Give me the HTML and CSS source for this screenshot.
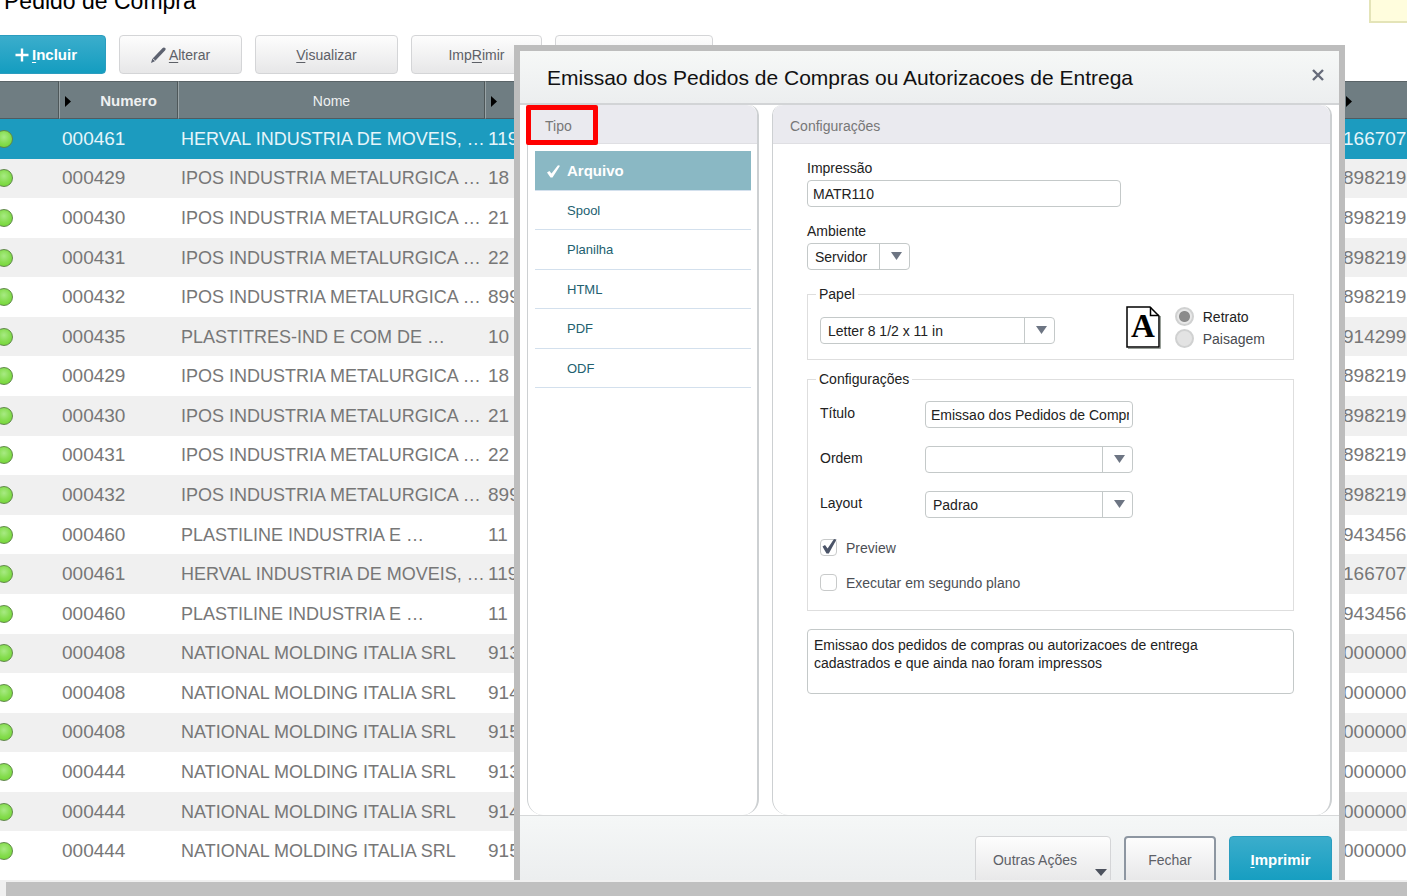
FILE: index.html
```html
<!DOCTYPE html>
<html lang="pt-BR">
<head>
<meta charset="utf-8">
<title>Pedido de Compra</title>
<link rel="stylesheet" href="styles.css">
</head>
<body>
<main class="page">
  <header class="page-head">
    <h1 class="page-title">Pedido de Compra</h1>
    <div class="note"></div>
  </header>
  <div class="toolbar">
    <button class="btn btn-primary w-add" type="button"><svg class="icon" width="14" height="14" viewBox="0 0 14 14"><path d="M7 0.5v13M0.5 7h13" stroke="#fff" stroke-width="2.4" fill="none"/></svg><span><u>I</u>ncluir</span></button>
    <button class="btn w-edit" type="button"><svg class="icon" width="15" height="16" viewBox="0 0 15 16"><path d="M0 16l1.2-4L11.4 1.2q1.4-1.4 2.8-.2 1 1.200-.2 2.500L3.800 14.200z" fill="#5d6270"/><path d="M1.800 11.600l2.200 2.200" stroke="#f6f6f6" stroke-width="0.900"/></svg><span><u>A</u>lterar</span></button>
    <button class="btn w-view" type="button"><span><u>V</u>isualizar</span></button>
    <button class="btn w-print" type="button"><span>Imp<u>R</u>imir</span></button>
    <button class="btn w-more" type="button" aria-label="Mais"></button>
  </div>
  <div class="table-wrap">
    <table class="grid">
      <colgroup><col class="c-status"><col class="c-num"><col class="c-name"><col class="c-doc"><col class="c-id"></colgroup>
      <thead>
        <tr><th></th><th class="bold"><i class="sort"></i>Numero</th><th>Nome</th><th><i class="sort"></i></th><th><i class="sort"></i></th></tr>
      </thead>
      <tbody>
        <tr class="selected"><td><i class="led"></i></td><td>000461</td><td>HERVAL INDUSTRIA DE MOVEIS, …</td><td>119</td><td>166707</td></tr>
        <tr><td><i class="led"></i></td><td>000429</td><td>IPOS INDUSTRIA METALURGICA …</td><td>18</td><td>898219</td></tr>
        <tr><td><i class="led"></i></td><td>000430</td><td>IPOS INDUSTRIA METALURGICA …</td><td>21</td><td>898219</td></tr>
        <tr><td><i class="led"></i></td><td>000431</td><td>IPOS INDUSTRIA METALURGICA …</td><td>22</td><td>898219</td></tr>
        <tr><td><i class="led"></i></td><td>000432</td><td>IPOS INDUSTRIA METALURGICA …</td><td>899</td><td>898219</td></tr>
        <tr><td><i class="led"></i></td><td>000435</td><td>PLASTITRES-IND E COM DE …</td><td>10</td><td>914299</td></tr>
        <tr><td><i class="led"></i></td><td>000429</td><td>IPOS INDUSTRIA METALURGICA …</td><td>18</td><td>898219</td></tr>
        <tr><td><i class="led"></i></td><td>000430</td><td>IPOS INDUSTRIA METALURGICA …</td><td>21</td><td>898219</td></tr>
        <tr><td><i class="led"></i></td><td>000431</td><td>IPOS INDUSTRIA METALURGICA …</td><td>22</td><td>898219</td></tr>
        <tr><td><i class="led"></i></td><td>000432</td><td>IPOS INDUSTRIA METALURGICA …</td><td>899</td><td>898219</td></tr>
        <tr><td><i class="led"></i></td><td>000460</td><td>PLASTILINE INDUSTRIA E …</td><td>11</td><td>943456</td></tr>
        <tr><td><i class="led"></i></td><td>000461</td><td>HERVAL INDUSTRIA DE MOVEIS, …</td><td>119</td><td>166707</td></tr>
        <tr><td><i class="led"></i></td><td>000460</td><td>PLASTILINE INDUSTRIA E …</td><td>11</td><td>943456</td></tr>
        <tr><td><i class="led"></i></td><td>000408</td><td>NATIONAL MOLDING ITALIA SRL</td><td>913</td><td>000000</td></tr>
        <tr><td><i class="led"></i></td><td>000408</td><td>NATIONAL MOLDING ITALIA SRL</td><td>914</td><td>000000</td></tr>
        <tr><td><i class="led"></i></td><td>000408</td><td>NATIONAL MOLDING ITALIA SRL</td><td>915</td><td>000000</td></tr>
        <tr><td><i class="led"></i></td><td>000444</td><td>NATIONAL MOLDING ITALIA SRL</td><td>913</td><td>000000</td></tr>
        <tr><td><i class="led"></i></td><td>000444</td><td>NATIONAL MOLDING ITALIA SRL</td><td>914</td><td>000000</td></tr>
        <tr><td><i class="led"></i></td><td>000444</td><td>NATIONAL MOLDING ITALIA SRL</td><td>915</td><td>000000</td></tr>
      </tbody>
    </table>
  </div>
  <div class="scroll-track"><div class="scroll-thumb"></div></div>

  <section class="dialog" role="dialog" aria-labelledby="dlg-title">
    <header class="dialog-head">
      <h2 class="dialog-title" id="dlg-title">Emissao dos Pedidos de Compras ou Autorizacoes de Entrega</h2>
      <button class="close" type="button" aria-label="Fechar janela"><svg width="12" height="12" viewBox="0 0 12 12"><path d="M1 1l10 10M11 1L1 11" stroke="#666b7a" stroke-width="2.400" fill="none"/></svg></button>
    </header>
    <div class="dialog-body">
      <section class="panel panel-type">
        <h3 class="panel-head">Tipo</h3>
        <div class="types">
          <button class="type active" type="button"><svg class="check" width="13" height="13" viewBox="0 0 13 13"><path d="M0 7.500l2.400-1.500 2.100 2.600L11 .3l2 .5L5.500 12.500H3.500z" fill="#fff"/></svg>Arquivo</button>
          <button class="type" type="button">Spool</button>
          <button class="type" type="button">Planilha</button>
          <button class="type" type="button">HTML</button>
          <button class="type" type="button">PDF</button>
          <button class="type" type="button">ODF</button>
        </div>
        <div class="highlight"></div>
      </section>
      <section class="panel panel-config">
        <h3 class="panel-head">Configurações</h3>
        <form class="form">
          <div class="field">
            <label for="impressao">Impressão</label>
            <input class="text w-report" id="impressao" type="text" value="MATR110">
          </div>
          <div class="field">
            <label for="ambiente">Ambiente</label>
            <div class="combo w-env"><select id="ambiente"><option>Servidor</option></select></div>
          </div>
          <fieldset class="group paper">
            <legend>Papel</legend>
            <div class="paper-row">
              <div class="combo w-paper"><select aria-label="Papel"><option>Letter 8 1/2 x 11 in</option></select></div>
              <div class="orientation">
                <svg width="35" height="43" viewBox="0 0 35 43"><path d="M2 42.500h32.500V10" stroke="#99a099" fill="none"/><path d="M1 1h23l9 9v31H1z" fill="#fff" stroke="#000" stroke-width="1.500"/><path d="M24.500 1v8.500H33" fill="none" stroke="#000" stroke-width="1.500"/><text class="page-letter" x="17" y="31" text-anchor="middle">A</text></svg>
                <div class="radios">
                  <label class="choice"><input type="radio" name="orient" checked>Retrato</label>
                  <label class="choice muted"><input type="radio" name="orient">Paisagem</label>
                </div>
              </div>
            </div>
          </fieldset>
          <fieldset class="group settings">
            <legend>Configurações</legend>
            <div class="pair"><label for="titulo">Título</label><input class="text" id="titulo" type="text" value="Emissao dos Pedidos de Compras ou Autorizacoes de Entrega"></div>
            <div class="pair"><label for="ordem">Ordem</label><div class="combo"><select id="ordem"><option></option></select></div></div>
            <div class="pair"><label for="layout">Layout</label><div class="combo"><select id="layout"><option>Padrao</option></select></div></div>
            <div class="checks">
              <label class="tick"><span class="tick-box"><input type="checkbox" checked><svg class="tick-mark" width="17" height="17" viewBox="0 0 17 17"><path d="M2.500 7.500l2.500-1.500 2.600 3.500L14 0l2.500.5L8.800 14.500H6.500z" fill="#4b5468"/></svg></span>Preview</label>
              <label class="tick"><span class="tick-box"><input type="checkbox"></span>Executar em segundo plano</label>
            </div>
          </fieldset>
          <textarea class="description" aria-label="Descrição" readonly>Emissao dos pedidos de compras ou autorizacoes de entrega cadastrados e que ainda nao foram impressos</textarea>
        </form>
      </section>
    </div>
    <footer class="dialog-foot">
      <button class="btn w-other" type="button">Outras Ações<i class="caret"></i></button>
      <button class="btn btn-focus w-close" type="button">Fechar</button>
      <button class="btn btn-primary w-go" type="button"><span><u>I</u>mprimir</span></button>
    </footer>
  </section>
</main>
</body>
</html>
```
FILE: styles.css
```css
* { box-sizing: border-box; }
body {
  margin: 0;
  background: #fff;
  color: #222;
  font: 14px/16px "Liberation Sans", Arial, sans-serif;
}
button, input, select, textarea { font: inherit; color: inherit; }
h1, h2, h3 { margin: 0; font-weight: normal; }

.page {
  position: relative;
  display: flex;
  flex-direction: column;
  height: 100vh;
  overflow: hidden;
}
.page-head {
  display: flex;
  justify-content: space-between;
  align-items: flex-start;
  height: 35px;
  flex: none;
}
.page-title {
  margin: -13px 0 0 4px;
  font-size: 23px;
  line-height: 28px;
  color: #000;
}
.note {
  width: 38px;
  height: 23px;
  background: #fffddd;
  border: solid #e4e4b8;
  border-width: 0 0 2px 2px;
}

.toolbar {
  display: flex;
  gap: 13px;
  height: 46px;
  margin-left: -14px;
  flex: none;
}
.btn {
  position: relative;
  display: flex;
  align-items: center;
  justify-content: center;
  gap: 3px;
  height: 39px;
  padding: 0;
  border: 1px solid #d4d5d7;
  border-radius: 4px;
  background: linear-gradient(#fdfdfd, #e7e7e8);
  color: #5d6067;
}
.btn u { text-underline-offset: 2px; }
.btn-primary {
  border-color: #2b9dbf;
  background: linear-gradient(#3badcc, #149dc0);
  color: #fff;
  font-size: 15px;
  font-weight: bold;
}
.btn-focus { border: 2px solid #8d96a1; }
.icon { flex: none; }
.w-add { width: 120px; }
.w-edit { width: 123px; }
.w-view { width: 143px; }
.w-print { width: 131px; }
.w-more { width: 158px; }
.w-other { width: 136px; padding-right: 16px; }
.w-close { width: 92px; }
.w-go { width: 103px; }
.caret {
  position: absolute;
  right: 3px;
  bottom: 7px;
  width: 12px;
  height: 7px;
  background: #4d525e;
  clip-path: polygon(0 0, 100% 0, 50% 100%);
}

.table-wrap { flex: 1; min-height: 0; overflow: hidden; }
.grid {
  width: 100%;
  height: 790px;
  table-layout: fixed;
  border-collapse: separate;
  border-spacing: 0;
  color: #777;
  font-size: 18px;
}
.c-status { width: 59px; }
.c-num { width: 119px; }
.c-name { width: 307px; }
.c-id { width: 65px; }
.grid th {
  position: relative;
  height: 38px;
  padding: 2px 0 0;
  background: #6f7d82;
  border-top: 1px solid #5a6468;
  border-bottom: 1px solid #505b60;
  border-right: 1px solid #4e5759;
  border-left: 1px solid #99a3a6;
  color: #eef0f1;
  font-size: 14px;
  font-weight: normal;
}
.grid th:first-child { border-left: 0; }
.grid th:last-child { border-right: 0; }
.grid th.bold { padding-left: 20px; font-weight: bold; font-size: 15px; }
.sort {
  position: absolute;
  left: 5px;
  top: 14px;
  width: 6px;
  height: 11px;
  background: #000;
  clip-path: polygon(0 0, 100% 50%, 0 100%);
}
.grid th:last-child .sort { left: 3px; }
.grid td {
  padding: 0 0 0 3px;
  white-space: nowrap;
  overflow: hidden;
  line-height: 20px;
}
.grid td:nth-child(2), .grid td:nth-child(4), .grid td:last-child { font-size: 19px; }
.grid td:first-child { padding: 0; }
.grid td:last-child { padding: 0 0 0 1px; }
.grid tbody tr:nth-child(even) { background: #f0f0f0; }
.grid tbody tr.selected { background: #1c9bbf; color: #e6f5fa; }
.led {
  display: block;
  width: 18px;
  height: 18px;
  margin-left: -5px;
  border: 1px solid #5f8848;
  border-radius: 50%;
  background: radial-gradient(circle at 50% 38%, #a8ea84, #86dd50 50%, #6cd32c);
}

.scroll-track {
  flex: none;
  height: 16px;
  padding: 2px 0 0 6px;
  background: #f0f0f0;
}
.scroll-thumb { height: 14px; background: #c0c0c0; }

.dialog {
  position: absolute;
  left: 514px;
  right: 62px;
  top: 45px;
  bottom: 16px;
  display: flex;
  flex-direction: column;
  overflow: hidden;
  border: 6px solid #bdbdbd;
  border-bottom: 0;
  background: #fff;
}
.dialog-head {
  display: flex;
  align-items: center;
  justify-content: space-between;
  flex: none;
  height: 54px;
  padding: 2px 15px 0 27px;
  border-bottom: 2px solid #d2d4d6;
  background: linear-gradient(#f6f8f7, #eceeef);
}
.dialog-title { font-size: 21px; line-height: 26px; color: #111; white-space: nowrap; }
.close {
  display: flex;
  padding: 0 0 6px;
  border: 0;
  background: none;
}
.dialog-body {
  display: flex;
  gap: 13px;
  flex: 1;
  min-height: 0;
  padding: 0 7px;
}
.panel {
  position: relative;
  border: 1px solid #cdd0d2;
  border-width: 0 2px 0 1px;
  border-radius: 10px 10px 16px 16px;
}
.panel-type { width: 232px; flex: none; }
.panel-config { flex: 1; }
.panel-head {
  height: 39px;
  padding: 0 17px;
  border-bottom: 1px solid #dfdfe3;
  border-radius: 10px 10px 0 0;
  background: #eaeaef;
  color: #777;
  font-size: 14px;
  line-height: 42px;
}
.highlight {
  position: absolute;
  left: -2px;
  top: 0;
  width: 72px;
  height: 40px;
  border: 5px solid #f00;
  border-radius: 2px;
}
.types {
  display: grid;
  grid-template-rows: repeat(6, 1fr);
  height: 237px;
  margin: 7px 6px 0 7px;
}
.type {
  display: flex;
  align-items: center;
  padding: 2px 0 0 32px;
  border: 0;
  border-bottom: 1px solid #d3e0ed;
  background: none;
  color: #22606f;
  font-size: 13px;
}
.type.active {
  padding-left: 12px;
  gap: 7px;
  background: #8ab8c4;
  color: #fff;
  font-size: 15px;
  font-weight: bold;
}

.form { padding: 16px 36px 0 34px; }
.field {
  display: flex;
  flex-direction: column;
  gap: 4px;
  margin-bottom: 16px;
}
.text {
  width: 208px;
  height: 27px;
  padding: 0 3px 0 5px;
  border: 1px solid #c4c9c9;
  border-radius: 4px;
  background: #fff;
}
.text.w-report { width: 314px; }
.combo { position: relative; width: 208px; height: 27px; }
.combo select {
  appearance: none;
  width: 100%;
  height: 100%;
  padding: 0 31px 0 7px;
  border: 1px solid #c4c9c9;
  border-radius: 4px;
  background: #fff;
}
.combo::before {
  content: "";
  position: absolute;
  right: 30px;
  top: 1px;
  bottom: 1px;
  width: 1px;
  background: #c4c9c9;
}
.combo::after {
  content: "";
  position: absolute;
  right: 8px;
  top: 9px;
  width: 11px;
  height: 8px;
  background: #6d7583;
  clip-path: polygon(0 0, 100% 0, 50% 100%);
  pointer-events: none;
}
.w-env { width: 103px; }
.combo.w-paper { width: 235px; }

.group {
  margin: 0;
  padding: 0 12px;
  border: 1px solid #dedede;
  min-width: 0;
}
.group legend { margin-left: -4px; padding: 0 3px; }
.paper { height: 74px; }
.paper-row {
  display: flex;
  align-items: flex-end;
  justify-content: space-between;
  padding: 4px 16px 0 0;
}
.paper-row .combo { margin-bottom: 5px; }
.orientation { display: flex; align-items: center; gap: 14px; }
.page-letter { font: bold 33px "Liberation Serif", serif; }
.radios { display: flex; flex-direction: column; gap: 3px; }
.choice { display: flex; align-items: center; gap: 9px; }
.choice input {
  appearance: none;
  width: 19px;
  height: 19px;
  margin: 0;
  border: 2px solid #d0d1d1;
  border-radius: 50%;
  background: #e3e3e3;
}
.choice input:checked { background: radial-gradient(circle, #8b8b8b 5px, #e8e8e8 6px); }
.muted { color: #484b50; }
.settings { height: 240px; margin-top: 11px; padding-top: 14px; }
.pair {
  display: grid;
  grid-template-columns: 105px auto;
  justify-content: start;
  margin-bottom: 18px;
}
.pair label { padding-top: 4px; }
.checks { display: flex; flex-direction: column; gap: 17px; padding-top: 3px; }
.tick { display: flex; align-items: center; gap: 9px; color: #4c4f55; }
.tick-box { position: relative; width: 17px; height: 18px; }
.tick-box input {
  appearance: none;
  display: block;
  width: 17px;
  height: 17px;
  margin: 0;
  border: 1px solid #c8caca;
  border-radius: 4px;
  background: #fff;
}
.tick-mark { position: absolute; left: 0; top: 0; }
.description {
  display: block;
  width: 100%;
  height: 65px;
  margin-top: 18px;
  padding: 6px 70px 0 6px;
  border: 1px solid #c4c9c9;
  border-radius: 4px;
  line-height: 18px;
  resize: none;
  overflow: hidden;
}

.dialog-foot {
  display: flex;
  justify-content: flex-end;
  gap: 13px;
  flex: none;
  height: 65px;
  padding: 20px 7px 0;
  border-top: 1px solid #d6d8d9;
  background: linear-gradient(#f5f7f7, #eceeef);
  overflow: hidden;
}
.dialog-foot .btn { height: 48px; }
```
